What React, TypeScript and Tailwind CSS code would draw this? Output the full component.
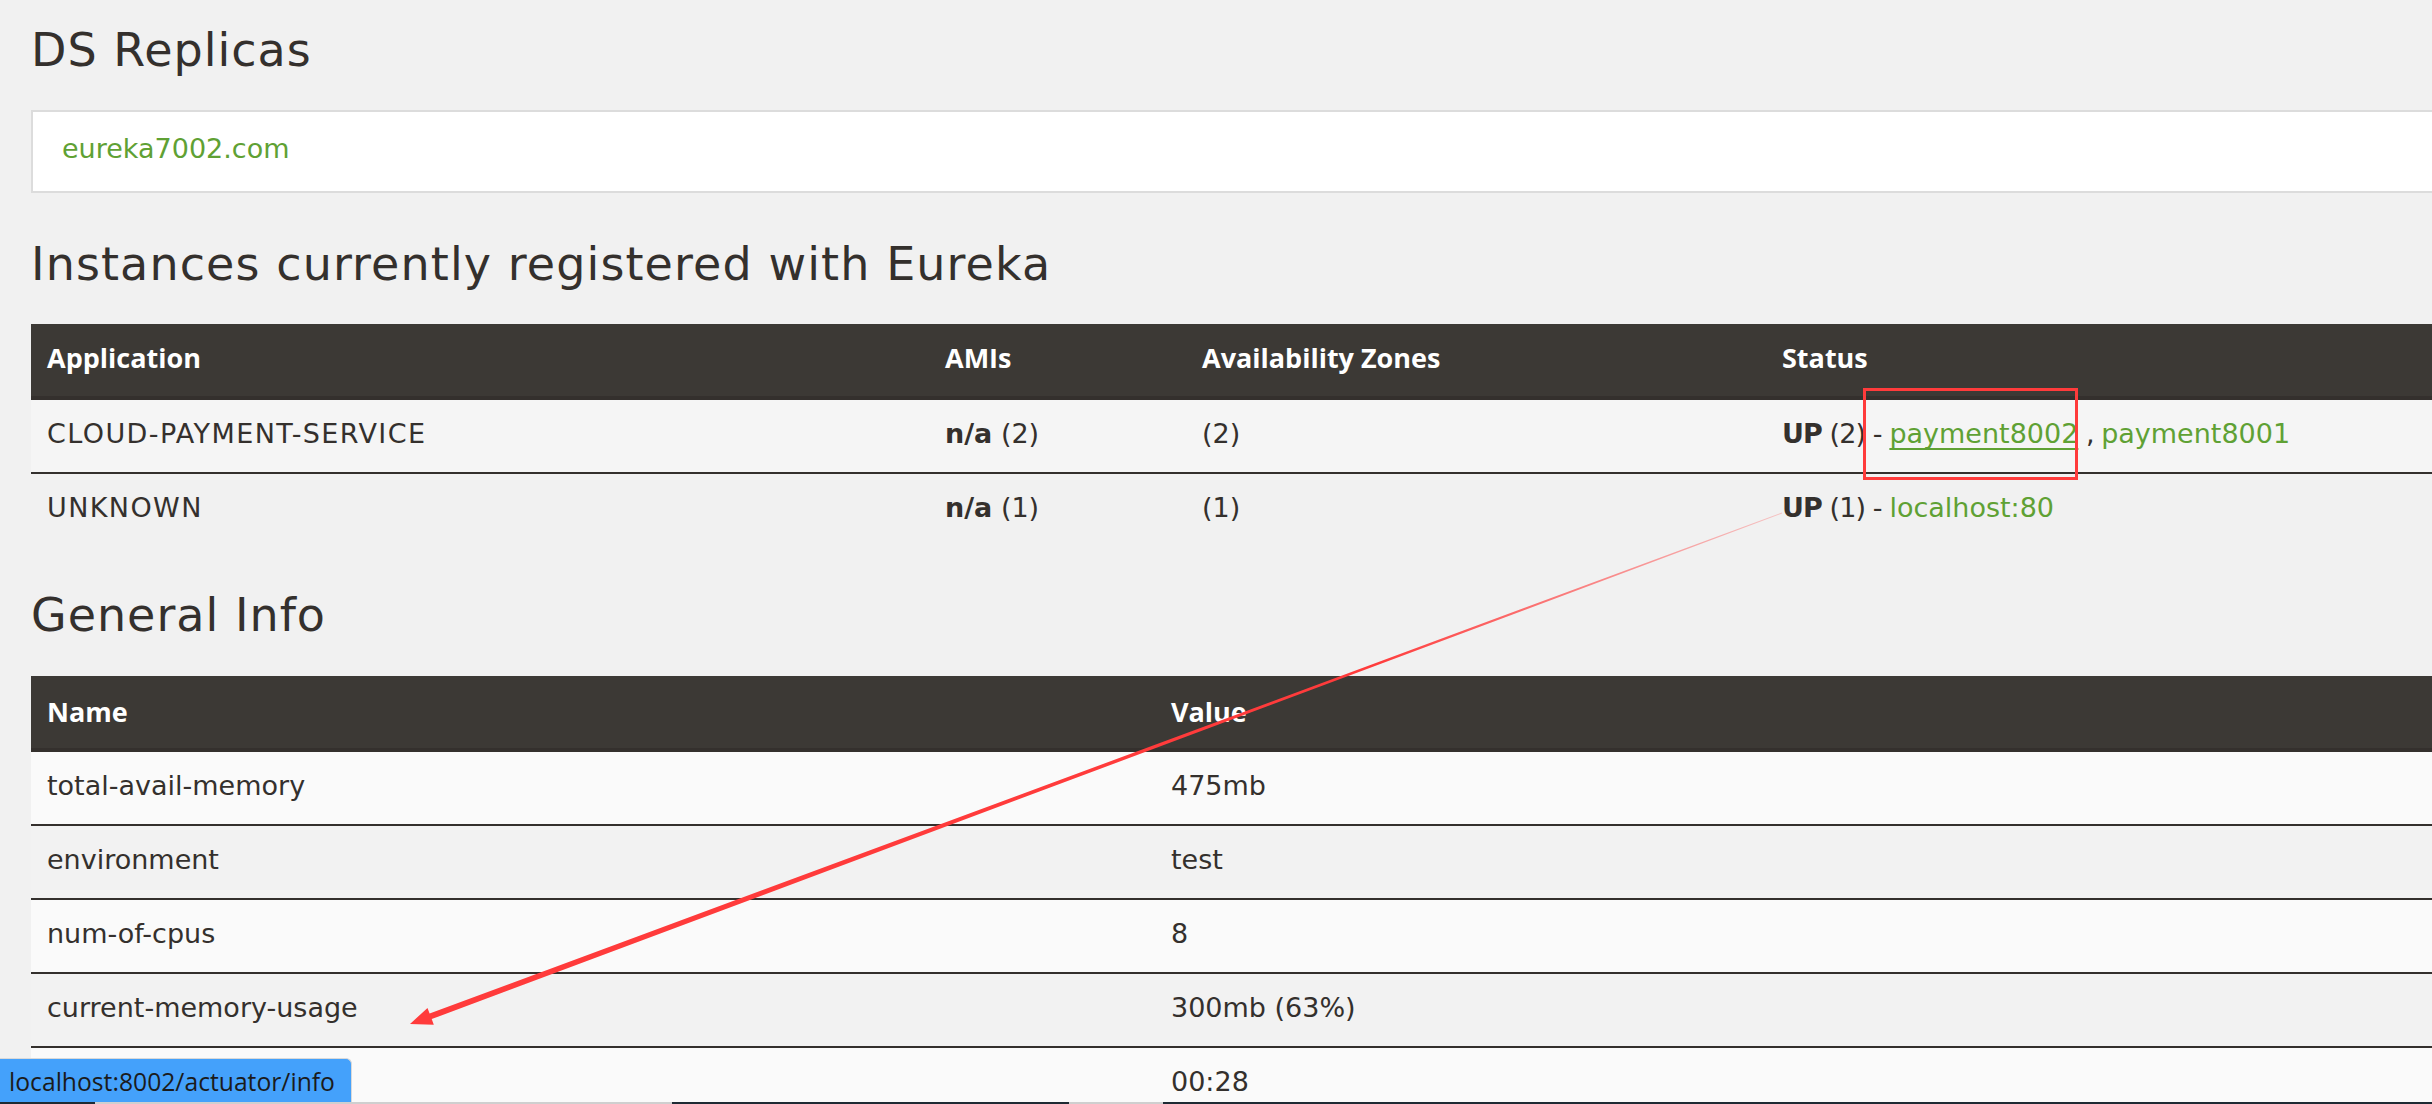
import React from "react";

const body = { fontFamily: '"DejaVu Sans", "Open Sans", sans-serif' };

function Th({ w, children }: { w?: string; children: React.ReactNode }) {
  return (
    <div className={`${w ?? "flex-1"} pl-[16px] font-['Open_Sans',sans-serif] font-bold text-[27px] text-white`}>
      {children}
    </div>
  );
}

function Td({ w, children }: { w?: string; children: React.ReactNode }) {
  return <div className={`${w ?? "flex-1"} pl-[16px] whitespace-nowrap`}>{children}</div>;
}

function Green({ children, u }: { children: React.ReactNode; u?: boolean }) {
  return (
    <span className={`text-[#5fa134] ${u ? "underline decoration-2 underline-offset-[5px]" : ""}`}>{children}</span>
  );
}

export default function App() {
  const info: [string, string][] = [
    ["total-avail-memory", "475mb"],
    ["environment", "test"],
    ["num-of-cpus", "8"],
    ["current-memory-usage", "300mb (63%)"],
    ["", "00:28"],
  ];

  return (
    <div className="relative w-[2432px] h-[1104px] overflow-hidden bg-[#f1f1f1] text-[#34302d]" style={body}>
      <div className="w-[2700px] pl-[31px] text-[27px]">
        <h1 className="h-[98px] flex items-center text-[46px] tracking-[1px] pt-[2px]">DS Replicas</h1>
        <div className="mt-[12px] h-[83px] bg-white border-2 border-[#dcdcdc] flex items-center pl-[29px] pb-[4px]">
          <Green>eureka7002.com</Green>
        </div>

        <h2 className="mt-[31px] mb-[20px] h-[80px] flex items-center text-[46px] tracking-[1.1px]">
          Instances currently registered with Eureka
        </h2>

        <div>
          <div className="h-[76px] bg-[#3c3935] border-b-4 border-[#34302d] flex items-center pb-[4px]">
            <Th w="w-[898px]">Application</Th>
            <Th w="w-[257px]">AMIs</Th>
            <Th w="w-[580px]">Availability Zones</Th>
            <Th>Status</Th>
          </div>
          <div className="h-[72px] bg-[#f5f5f5] flex items-center pb-[3px]">
            <Td w="w-[898px]">
              <span className="tracking-[1.4px]">CLOUD-PAYMENT-SERVICE</span>
            </Td>
            <Td w="w-[257px]">
              <b>n/a</b> (2)
            </Td>
            <Td w="w-[580px]">(2)</Td>
            <Td>
              <span className="tracking-[-0.9px]">
                <b>UP</b> (2) -{" "}
              </span>
              <Green u>payment8002</Green>
              <span className="tracking-[-1px]"> , </span>
              <Green>payment8001</Green>
            </Td>
          </div>
          <div className="h-[74px] border-t-2 border-[#34302d] flex items-center pb-[3px]">
            <Td w="w-[898px]">
              <span className="tracking-[1.4px]">UNKNOWN</span>
            </Td>
            <Td w="w-[257px]">
              <b>n/a</b> (1)
            </Td>
            <Td w="w-[580px]">(1)</Td>
            <Td>
              <span className="tracking-[-0.9px]">
                <b>UP</b> (1) -{" "}
              </span>
              <Green>localhost:80</Green>
            </Td>
          </div>
        </div>

        <h2 className="mt-[29px] mb-[21px] h-[80px] flex items-center text-[46px] tracking-[1px]">General Info</h2>

        <div>
          <div className="h-[76px] bg-[#3c3935] border-b-4 border-[#34302d] flex items-center">
            <Th w="w-[1124px]">Name</Th>
            <Th>Value</Th>
          </div>
          {info.map(([k, v], i) => (
            <div
              key={i}
              className={`${i === 0 ? "h-[72px]" : "h-[74px] border-t-2 border-[#34302d]"} ${
                i % 2 === 0 ? "bg-[#fafafa]" : "bg-[#f2f2f2]"
              } flex items-center pb-[3px]`}
            >
              <Td w="w-[1124px]">{k}</Td>
              <Td>{v}</Td>
            </div>
          ))}
        </div>
      </div>

      {/* annotation: red box */}
      <div className="absolute left-[1863px] top-[388px] w-[215px] h-[92px] border-[3px] border-[#ff3b3b]" />

      {/* annotation: arrow */}
      <svg className="absolute left-0 top-0 pointer-events-none" width="2432" height="1104" viewBox="0 0 2432 1104">
        <defs>
          <linearGradient id="fade" gradientUnits="userSpaceOnUse" x1="1782" y1="513" x2="411" y2="1024">
            <stop offset="0" stopColor="#ff3b3b" stopOpacity="0.25" />
            <stop offset="0.3" stopColor="#ff3b3b" stopOpacity="1" />
            <stop offset="1" stopColor="#ff3b3b" stopOpacity="1" />
          </linearGradient>
        </defs>
        <polygon
          points="1782.2,513.5 1781.8,512.5 429.6,1013.5 427.5,1007.9 410,1024 433.8,1024.7 431.7,1019.1"
          fill="url(#fade)"
        />
      </svg>

      {/* browser status bubble */}
      <div className="absolute left-0 top-[1058px] w-[352px] h-[46px] bg-[#44a1fb] rounded-tr-[6px] border-t border-r border-[#d9d9d9] flex items-center pl-[9px] pt-[2px]">
        <span className="font-['Open_Sans',sans-serif] text-[24.7px] text-[#1b1b1b] leading-none">
          localhost:8002/actuator/info
        </span>
      </div>

      {/* bottom strip */}
      <div className="absolute left-0 bottom-0 w-full h-[2px] flex">
        <div className="w-[95px] bg-[#1e2a33]" />
        <div className="w-[577px] bg-[#cfcfcf]" />
        <div className="w-[397px] bg-[#1e2a33]" />
        <div className="w-[94px] bg-[#cfcfcf]" />
        <div className="flex-1 bg-[#1e2a33]" />
      </div>
    </div>
  );
}
